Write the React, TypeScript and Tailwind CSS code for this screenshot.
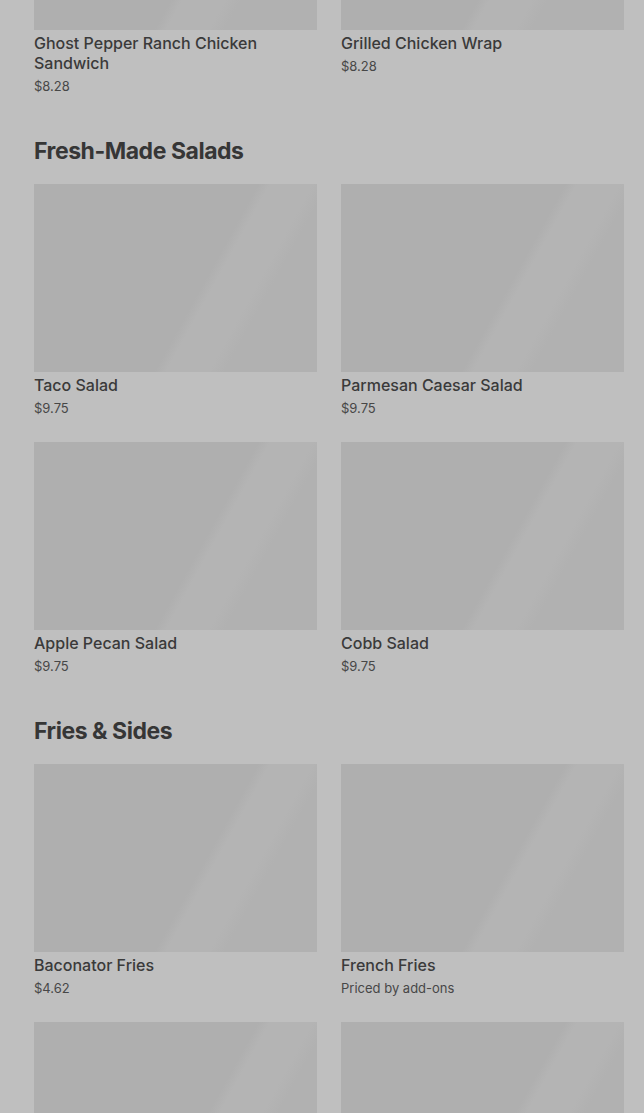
import React from "react";

type Item = { name: string; price: string };

const Thumb = () => (
  <div
    className="h-[188px] w-full bg-[#afafaf]"
    style={{
      backgroundImage:
        "linear-gradient(119deg, #afafaf 0%, #afafaf 58%, #b4b4b4 61%, #b4b4b4 72%, #b1b1b1 76%, #b1b1b1 100%)",
    }}
  />
);

const Card = ({ item }: { item: Item }) => (
  <div className="flex flex-col">
    <Thumb />
    <div className="mt-[3px] text-[16px] leading-[20px] font-medium text-[#3a3a3a]">{item.name}</div>
    <div className="mt-[3px] text-[13px] leading-[20px] text-[#474747]">{item.price}</div>
  </div>
);

const Grid = ({ items, className = "" }: { items: Item[]; className?: string }) => (
  <div className={`grid grid-cols-2 gap-x-6 gap-y-6 ${className}`}>
    {items.map((it) => (
      <Card key={it.name} item={it} />
    ))}
  </div>
);

const Heading = ({ children }: { children: React.ReactNode }) => (
  <h2 className="mt-[39px] mb-[17px] h-[32px] text-[23px] leading-[32px] font-bold tracking-[-0.02em] text-[#363636]">
    {children}
  </h2>
);

export default function App() {
  return (
    <div
      className="h-[1113px] overflow-hidden bg-[#bfbfbf] pl-[34px] pr-[20px]"
      style={{ fontFamily: "Inter, 'Noto Sans', sans-serif" }}
    >
      <Grid
        className="-mt-[158px]"
        items={[
          { name: "Ghost Pepper Ranch Chicken Sandwich", price: "$8.28" },
          { name: "Grilled Chicken Wrap", price: "$8.28" },
        ]}
      />
      <Heading>Fresh-Made Salads</Heading>
      <Grid
        items={[
          { name: "Taco Salad", price: "$9.75" },
          { name: "Parmesan Caesar Salad", price: "$9.75" },
          { name: "Apple Pecan Salad", price: "$9.75" },
          { name: "Cobb Salad", price: "$9.75" },
        ]}
      />
      <Heading>Fries &amp; Sides</Heading>
      <Grid
        items={[
          { name: "Baconator Fries", price: "$4.62" },
          { name: "French Fries", price: "Priced by add-ons" },
        ]}
      />
      <div className="mt-6 grid grid-cols-2 gap-x-6">
        <Thumb />
        <Thumb />
      </div>
    </div>
  );
}
